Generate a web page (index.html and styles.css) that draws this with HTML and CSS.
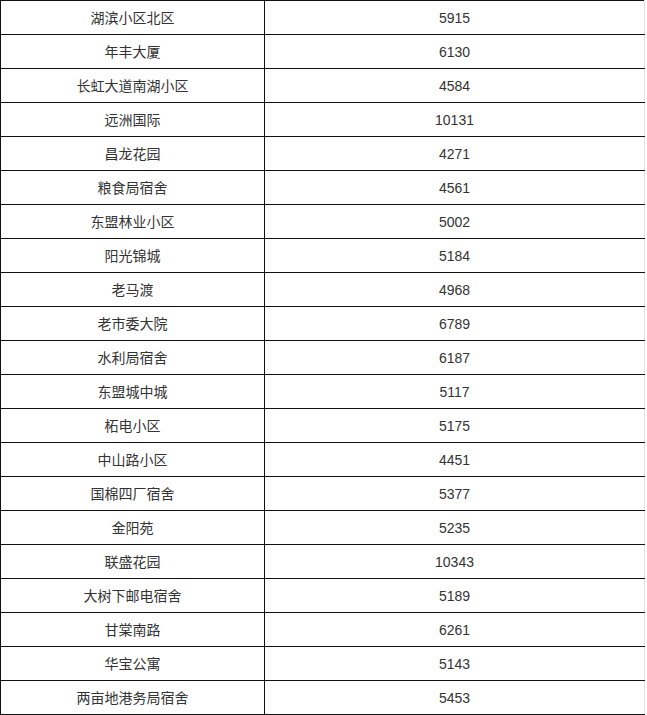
FILE: index.html
```html
<!DOCTYPE html>
<html lang="zh">
<head>
<meta charset="utf-8">
<link rel="stylesheet" href="styles.css">
</head>
<body>
<table class="price-table">
<tbody>
<tr><td class="name">湖滨小区北区</td><td class="num">5915</td></tr>
<tr><td class="name">年丰大厦</td><td class="num">6130</td></tr>
<tr><td class="name">长虹大道南湖小区</td><td class="num">4584</td></tr>
<tr><td class="name">远洲国际</td><td class="num">10131</td></tr>
<tr><td class="name">昌龙花园</td><td class="num">4271</td></tr>
<tr><td class="name">粮食局宿舍</td><td class="num">4561</td></tr>
<tr><td class="name">东盟林业小区</td><td class="num">5002</td></tr>
<tr><td class="name">阳光锦城</td><td class="num">5184</td></tr>
<tr><td class="name">老马渡</td><td class="num">4968</td></tr>
<tr><td class="name">老市委大院</td><td class="num">6789</td></tr>
<tr><td class="name">水利局宿舍</td><td class="num">6187</td></tr>
<tr><td class="name">东盟城中城</td><td class="num">5117</td></tr>
<tr><td class="name">柘电小区</td><td class="num">5175</td></tr>
<tr><td class="name">中山路小区</td><td class="num">4451</td></tr>
<tr><td class="name">国棉四厂宿舍</td><td class="num">5377</td></tr>
<tr><td class="name">金阳苑</td><td class="num">5235</td></tr>
<tr><td class="name">联盛花园</td><td class="num">10343</td></tr>
<tr><td class="name">大树下邮电宿舍</td><td class="num">5189</td></tr>
<tr><td class="name">甘棠南路</td><td class="num">6261</td></tr>
<tr><td class="name">华宝公寓</td><td class="num">5143</td></tr>
<tr><td class="name">两亩地港务局宿舍</td><td class="num">5453</td></tr>
</tbody>
</table>
</body>
</html>
```
FILE: styles.css
```css
html, body {
  margin: 0;
  padding: 0;
  background: #ffffff;
}
.price-table {
  border-collapse: collapse;
  width: 645px;
  table-layout: fixed;
  font-family: "Liberation Sans", "Noto Sans CJK SC", sans-serif;
  font-size: 14px;
  color: #333333;
  border-right: 1px solid #e4e4e4;
}
.price-table td {
  border: 1px solid #111111;
  height: 33px;
  padding: 0;
  text-align: center;
  vertical-align: middle;
  line-height: 16px;
}
.price-table td.name {
  width: 263px;
}
.price-table td.num {
  border-right: 1px solid #e4e4e4;
}
```
